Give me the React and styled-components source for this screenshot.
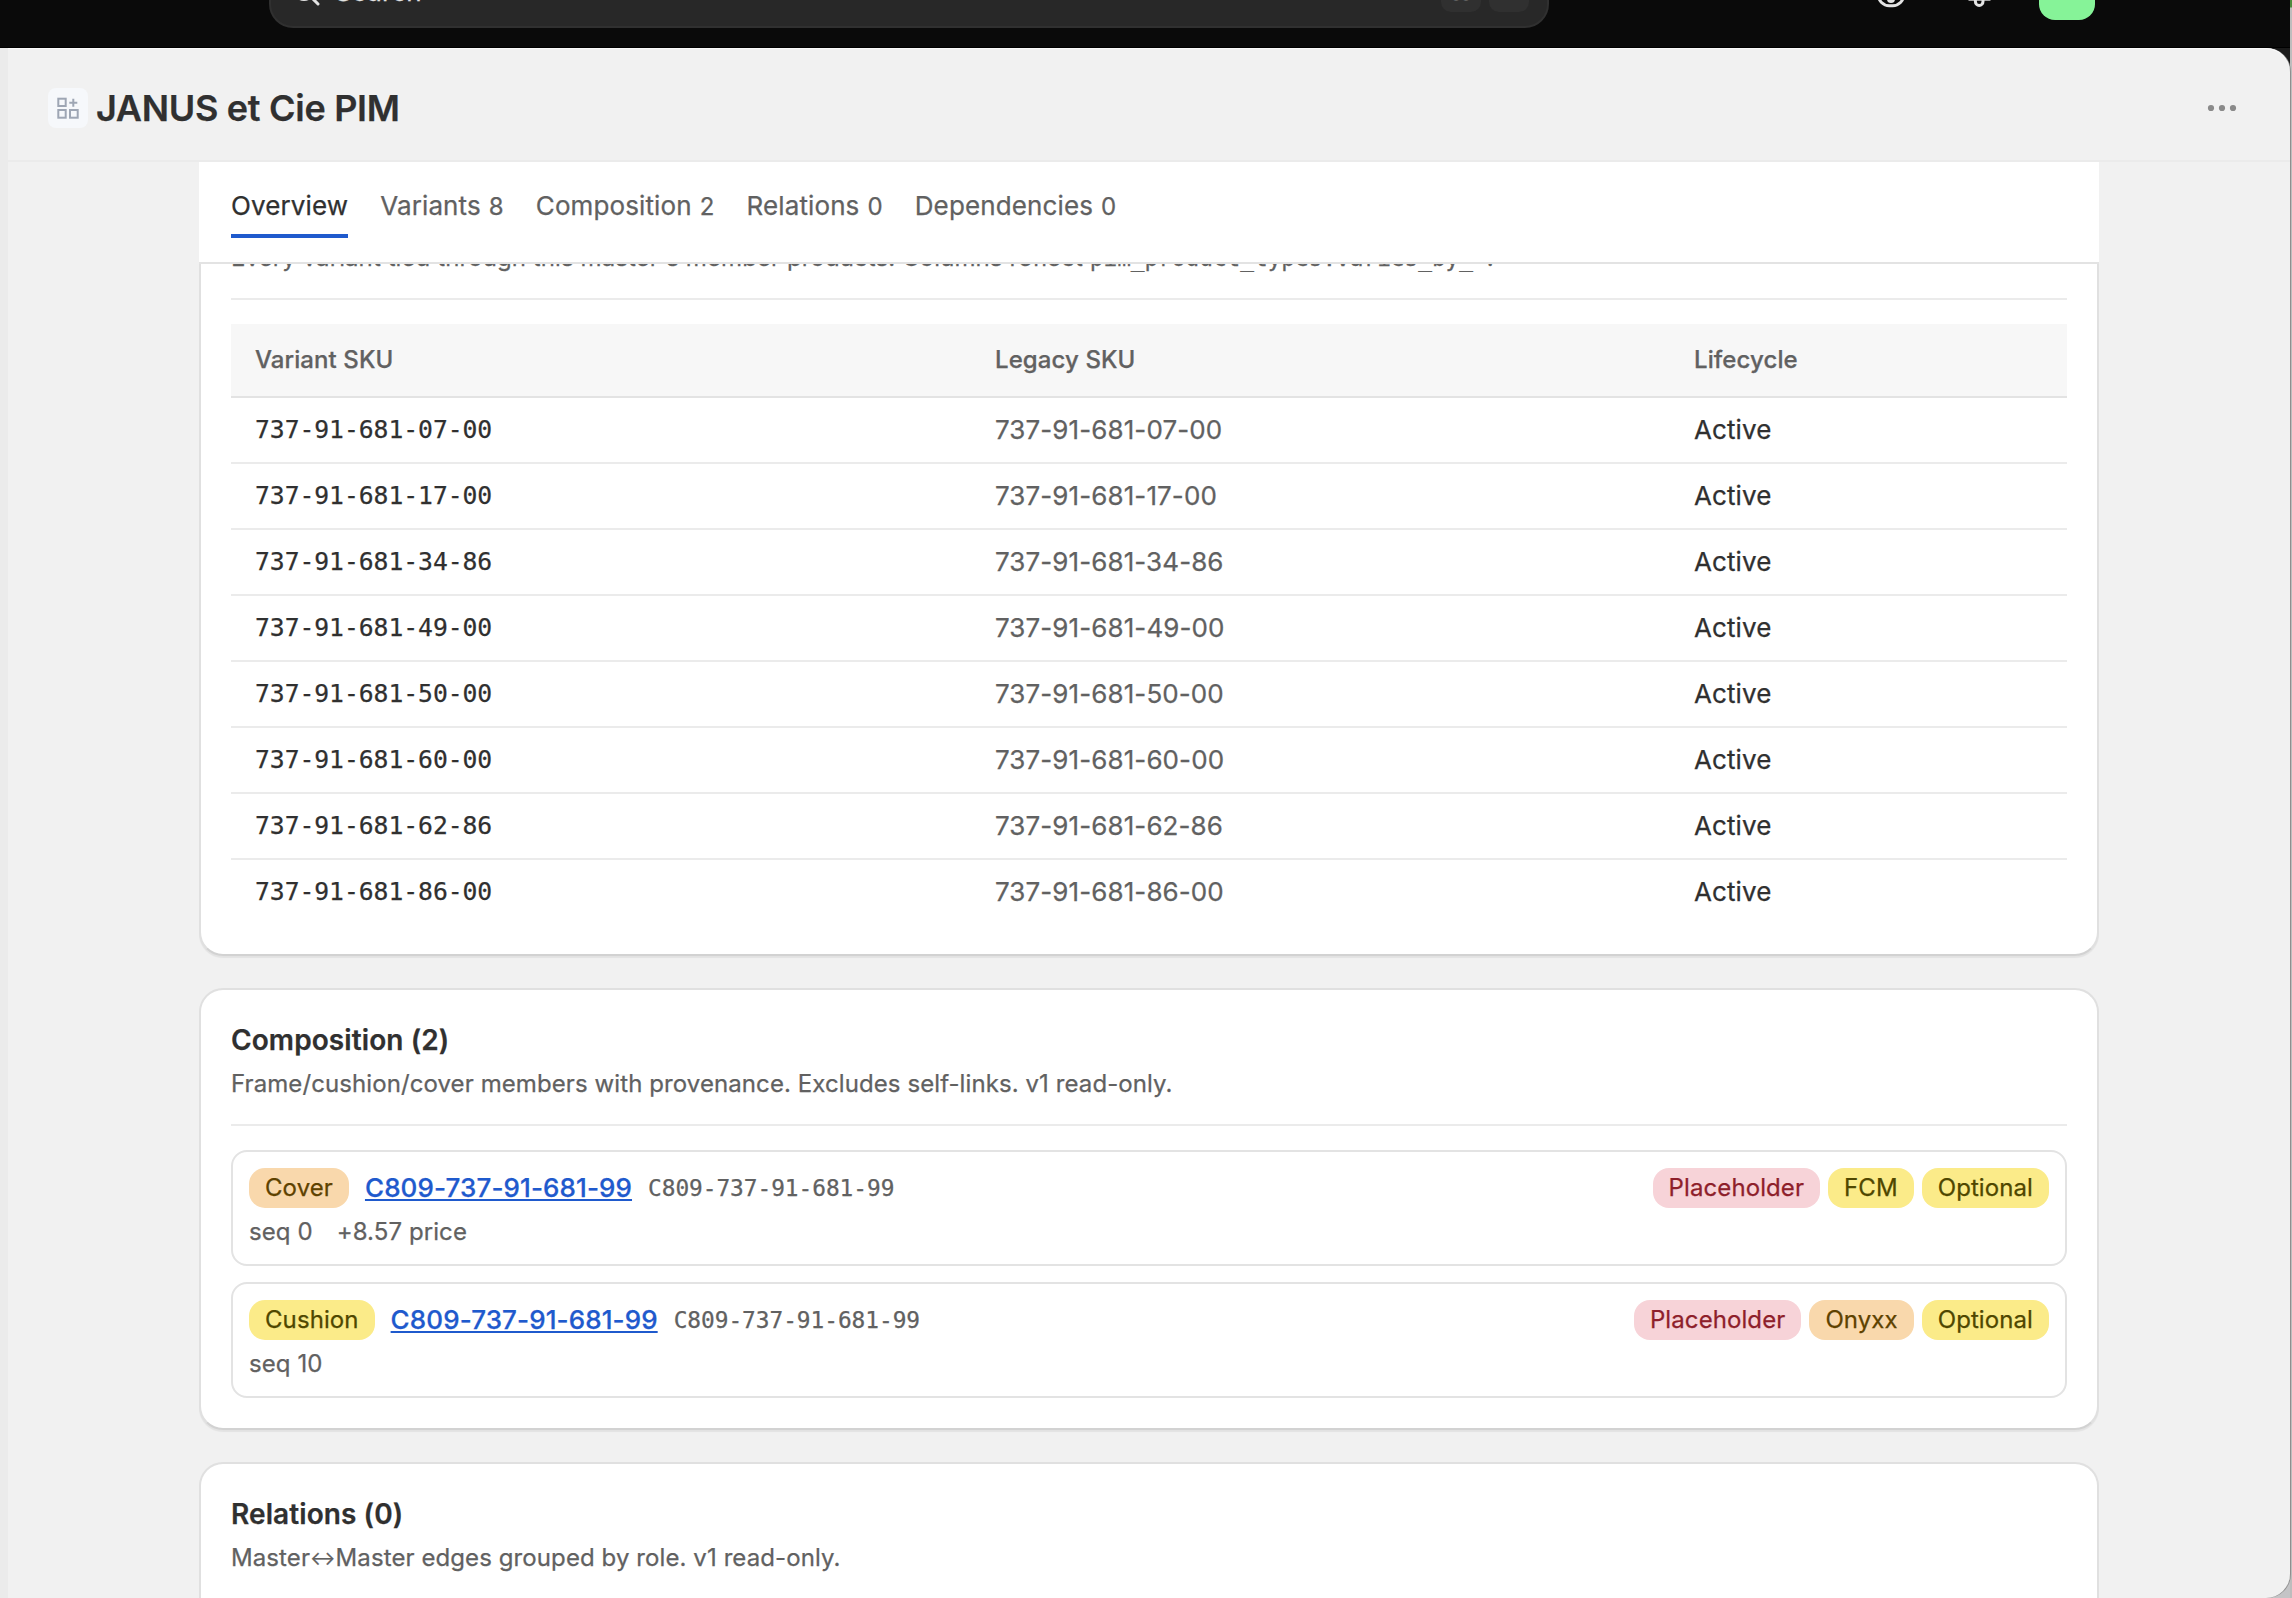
import React from 'react';
import styled, { createGlobalStyle, css } from 'styled-components';

const GlobalStyle = createGlobalStyle`
  * {
    box-sizing: border-box;
  }

  body {
    margin: 0;
    background: #0a0a0a;
    color: #303030;
    font-family: Inter, 'Liberation Sans', sans-serif;
    font-size: 26px;
    font-weight: 400;
    line-height: 40px;
    letter-spacing: 0.09px;
    -webkit-font-smoothing: antialiased;
    -webkit-text-stroke-width: 0.25px;
    overflow: hidden;
  }
`;

const Screen = styled.div`
  display: flex;
  flex-direction: column;
  width: 2292px;
  height: 1598px;
  padding-right: 2px;
  overflow: hidden;
  background: linear-gradient(#4f8a3c 0, #4f8a3c 7px, #bdbdbd 8px);
`;

// Top bar
const TopBar = styled.header`
  flex: none;
  display: flex;
  align-items: flex-end;
  height: 48px;
  padding-left: 269px;
  border-bottom: 1px solid #000;
  overflow: hidden;
  background: #0a0a0a;
`;

const SearchField = styled.div`
  flex: none;
  display: flex;
  align-items: center;
  width: 1280px;
  height: 72px;
  margin-bottom: 19px;
  padding: 0 18px 0 20px;
  border: 2px solid #303030;
  border-radius: 24px;
  background: #282828;
  color: #e3e3e3;
`;

const SearchLabel = styled.span`
  flex: 1;
  margin-left: 12px;
`;

const Key = styled.kbd`
  width: 40px;
  height: 40px;
  margin-left: 8px;
  border-radius: 10px;
  background: #303030;
  color: #6f6f6f;
  font-family: inherit;
  font-size: 22px;
  text-align: center;
`;

const TopActions = styled.div`
  flex: none;
  display: flex;
  align-items: flex-end;
  height: 100px;
  margin-left: 322px;
  padding-bottom: 27px;
`;

const TopIcon = styled.svg`
  flex: none;
  width: 40px;
  height: 40px;
  margin-right: 48px;
  margin-bottom: 6px;

  & + & {
    margin-right: 40px;
  }
`;

const Avatar = styled.div`
  width: 56px;
  height: 56px;
  border-radius: 16px;
  background: #86f398;
`;

// Page frame
const Body = styled.div`
  flex: 1;
  display: flex;
  min-height: 0;
  background: linear-gradient(#1a1a1a 0, #1a1a1a 40px, #c4c4c6 60px);
`;

const NavEdge = styled.div`
  flex: none;
  width: 8px;
  background: #ebebeb;
`;

const Frame = styled.main`
  flex: none;
  display: flex;
  flex-direction: column;
  width: 2282px;
  border-radius: 0 24px 24px 0;
  background: #f1f1f1;
  box-shadow: inset 0 1px 0 #fafafa, 1px 0 0 #8f8f8f;
  overflow: hidden;
`;

const TitleBar = styled.div`
  flex: none;
  display: flex;
  align-items: center;
  height: 114px;
  padding: 8px 52px 0 40px;
  border-bottom: 2px solid #ebebeb;
`;

const AppBadge = styled.span`
  display: flex;
  align-items: center;
  justify-content: center;
  width: 40px;
  height: 40px;
  border-radius: 8px;
  background: #f6f8fb;
`;

const PageTitle = styled.h1`
  flex: 1;
  margin: 0 0 0 8px;
  font-size: 36px;
  font-weight: 600;
  letter-spacing: -0.3px;
`;

const Content = styled.div`
  flex: 1;
  display: flex;
  flex-direction: column;
  width: 1900px;
  min-height: 0;
  margin-left: 191px;
`;

const TabBar = styled.nav`
  flex: none;
  display: flex;
  gap: 32px;
  height: 102px;
  padding: 22px 32px 0;
  border-bottom: 2px solid #e3e3e3;
  background: #fff;
`;

const Tab = styled.button`
  display: flex;
  align-items: flex-start;
  gap: 8px;
  height: 54px;
  padding: 2px 0 0;
  border: 0;
  border-bottom: 4px solid ${({ $active }) => ($active ? '#1f5acd' : 'transparent')};
  background: none;
  color: ${({ $active }) => ($active ? '#303030' : '#616161')};
  font: inherit;
  letter-spacing: 0.12px;
`;

const Count = styled.span`
  font-size: 24px;
  line-height: 42px;
`;

const CardStack = styled.div`
  flex: 1;
  display: flex;
  flex-direction: column;
  gap: 32px;
  min-height: 0;
  overflow: hidden;
`;

const Card = styled.section`
  flex: none;
  padding: 30px;
  border: 2px solid #e0e0e0;
  border-bottom-color: #d2d2d2;
  border-radius: 24px;
  background: #fff;
  box-shadow: 0 2px 1px rgba(0, 0, 0, 0.06);
  ${({ $scrolled }) => $scrolled && css`
    margin-top: -62px;
  `}
`;

const CardTitle = styled.h2`
  margin: 0;
  font-size: 28px;
  font-weight: 600;
`;

const CardNote = styled.p`
  margin: 4px 0 0;
  padding-bottom: 20px;
  border-bottom: 2px solid #ebebeb;
  color: #616161;
  font-size: 24px;
`;

const Arrow = styled.span`
  font-size: 19px;
  line-height: 1;
  vertical-align: 1px;
`;

const Mono = styled.span`
  font-family: 'DejaVu Sans Mono', monospace;
  font-size: 0.95em;
  letter-spacing: -0.04px;
  ${({ $muted }) => $muted && css`
    color: #616161;
    font-size: 22.8px;
  `}
`;

const Table = styled.div`
  margin-top: 24px;
`;

const Row = styled.div`
  display: grid;
  grid-template-columns: 740px 699px 1fr;
  align-items: center;
  height: 66px;
  padding: 0 24px;
  border-top: 2px solid #ebebeb;

  &:nth-child(2) {
    border-top-color: #e3e3e3;
  }
`;

const HeadRow = styled(Row)`
  height: 72px;
  border-top: 0;
  background: #f7f7f7;
  color: #616161;
  font-size: 24px;
  font-weight: 500;
`;

const Subdued = styled.span`
  color: #616161;
`;

const Members = styled.div`
  display: flex;
  flex-direction: column;
  gap: 16px;
  margin-top: 24px;
`;

const Member = styled.article`
  height: 116px;
  padding: 16px;
  border: 2px solid #e3e3e3;
  border-radius: 16px;
`;

const MemberTop = styled.div`
  display: flex;
  align-items: center;
  gap: 16px;
`;

const tones = {
  orange: { background: '#f9d8ac', color: '#5e4200' },
  yellow: { background: '#fbeb89', color: '#4f4700' },
  pink: { background: '#f7d3d8', color: '#8e1f2b' },
};

const Badge = styled.span`
  padding: 0 16px;
  border-radius: 16px;
  background: ${({ $tone }) => tones[$tone].background};
  color: ${({ $tone }) => tones[$tone].color};
  font-size: 24px;
`;

const Badges = styled.div`
  display: flex;
  gap: 8px;
  margin-left: auto;
`;

const ProductLink = styled.a`
  color: #1f5acd;
  font-weight: 500;
  letter-spacing: 0.11px;
  text-decoration: underline;
`;

const MemberMeta = styled.div`
  display: flex;
  gap: 24px;
  margin-top: 4px;
  color: #616161;
  font-size: 24px;
`;

const skus = [
  '737-91-681-07-00',
  '737-91-681-17-00',
  '737-91-681-34-86',
  '737-91-681-49-00',
  '737-91-681-50-00',
  '737-91-681-60-00',
  '737-91-681-62-86',
  '737-91-681-86-00',
];

const tabs = [
  { label: 'Overview' },
  { label: 'Variants', count: 8 },
  { label: 'Composition', count: 2 },
  { label: 'Relations', count: 0 },
  { label: 'Dependencies', count: 0 },
];

const members = [
  {
    role: 'Cover',
    tone: 'orange',
    sku: 'C809-737-91-681-99',
    meta: ['seq 0', '+8.57 price'],
    badges: [['Placeholder', 'pink'], ['FCM', 'yellow'], ['Optional', 'yellow']],
  },
  {
    role: 'Cushion',
    tone: 'yellow',
    sku: 'C809-737-91-681-99',
    meta: ['seq 10'],
    badges: [['Placeholder', 'pink'], ['Onyxx', 'orange'], ['Optional', 'yellow']],
  },
];

function SearchIcon() {
  return (
    <svg width="32" height="32" viewBox="0 0 32 32" fill="none" stroke="#e3e3e3" strokeWidth="3" strokeLinecap="round">
      <circle cx="13" cy="14" r="9.5" />
      <path d="M19.7 20.7 L27 28" />
    </svg>
  );
}

function AppsIcon() {
  return (
    <svg width="24" height="24" viewBox="0 0 24 24" fill="none" stroke="#9ea6b4" strokeWidth="2">
      <rect x="2.3" y="2.7" width="7.4" height="7.3" />
      <rect x="2.3" y="14" width="7.4" height="7.7" />
      <rect x="14" y="14" width="7.7" height="7.7" />
      <path d="M17.3 2.7v8M13.3 6.7h8" />
    </svg>
  );
}

function DotsIcon() {
  return (
    <svg width="32" height="12" viewBox="0 0 32 12" fill="#8a8a8a">
      <circle cx="5" cy="6" r="3.1" />
      <circle cx="16" cy="6" r="3.1" />
      <circle cx="27" cy="6" r="3.1" />
    </svg>
  );
}

function App() {
  return (
    <Screen>
      <GlobalStyle />
      <TopBar>
        <SearchField>
          <SearchIcon />
          <SearchLabel>Search</SearchLabel>
          <Key>⌘</Key>
          <Key />
        </SearchField>
        <TopActions>
          <TopIcon viewBox="0 0 40 40" fill="none" stroke="#e3e3e3" strokeWidth="3">
            <rect x="7.3" y="8" width="25.4" height="23.7" rx="11" />
            <circle cx="20" cy="25" r="2.5" />
          </TopIcon>
          <TopIcon viewBox="0 0 40 40" fill="none" stroke="#e3e3e3" strokeWidth="3">
            <path d="M9.5 26h22" strokeWidth="1.4" />
            <path d="M16.4 26v1.5a3.8 4 0 0 0 7.6 0v-1.5" />
          </TopIcon>
          <Avatar />
        </TopActions>
      </TopBar>
      <Body>
        <NavEdge />
        <Frame>
          <TitleBar>
            <AppBadge><AppsIcon /></AppBadge>
            <PageTitle>JANUS et Cie PIM</PageTitle>
            <DotsIcon />
          </TitleBar>
          <Content>
            <TabBar>
              {tabs.map(({ label, count }, i) => (
                <Tab key={label} $active={i === 0}>
                  {label}
                  {count !== undefined && <Count>{count}</Count>}
                </Tab>
              ))}
            </TabBar>
            <CardStack>
              <Card $scrolled>
                <CardNote>
                  Every variant tied through this master's member products. Columns reflect{' '}
                  <Mono>pim_product_types.varies_by_*</Mono>.
                </CardNote>
                <Table>
                  <HeadRow>
                    <span>Variant SKU</span>
                    <span>Legacy SKU</span>
                    <span>Lifecycle</span>
                  </HeadRow>
                  {skus.map((sku) => (
                    <Row key={sku}>
                      <Mono>{sku}</Mono>
                      <Subdued>{sku}</Subdued>
                      <span>Active</span>
                    </Row>
                  ))}
                </Table>
              </Card>
              <Card>
                <CardTitle>Composition (2)</CardTitle>
                <CardNote>Frame/cushion/cover members with provenance. Excludes self-links. v1 read-only.</CardNote>
                <Members>
                  {members.map((member) => (
                    <Member key={member.role}>
                      <MemberTop>
                        <Badge $tone={member.tone}>{member.role}</Badge>
                        <ProductLink>{member.sku}</ProductLink>
                        <Mono $muted>{member.sku}</Mono>
                        <Badges>
                          {member.badges.map(([text, tone]) => (
                            <Badge key={text} $tone={tone}>{text}</Badge>
                          ))}
                        </Badges>
                      </MemberTop>
                      <MemberMeta>
                        {member.meta.map((text) => <span key={text}>{text}</span>)}
                      </MemberMeta>
                    </Member>
                  ))}
                </Members>
              </Card>
              <Card>
                <CardTitle>Relations (0)</CardTitle>
                <CardNote>
                  Master<Arrow>↔</Arrow>Master edges grouped by role. v1 read-only.
                </CardNote>
              </Card>
            </CardStack>
          </Content>
        </Frame>
      </Body>
    </Screen>
  );
}

export default App;
